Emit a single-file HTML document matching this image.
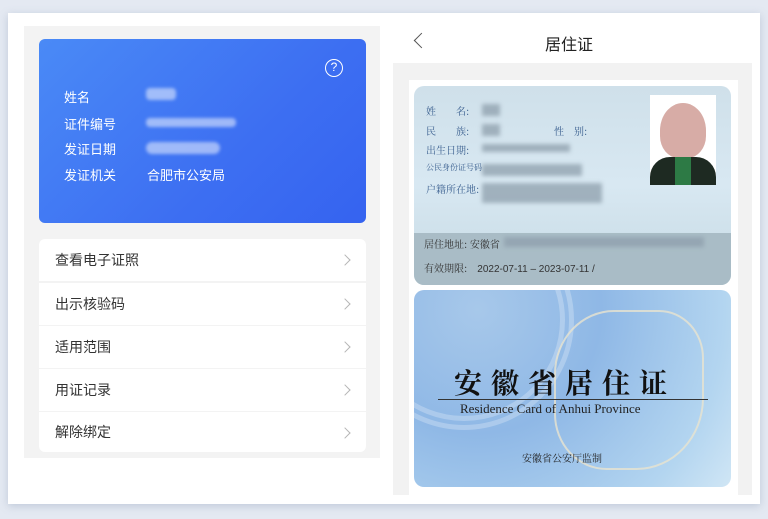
<!DOCTYPE html>
<html><head><meta charset="utf-8"><style>
*{margin:0;padding:0;box-sizing:border-box}
body{width:768px;height:519px;background:#e4e9f2;position:relative;overflow:hidden;font-family:"Liberation Sans","Noto Sans CJK SC",sans-serif}
.panel{position:absolute;left:8px;top:13px;width:752px;height:491px;background:#fff;box-shadow:0 2px 8px rgba(120,140,170,.35)}
.lg{position:absolute;left:24px;top:26px;width:356px;height:432px;background:#f3f3f3}
.blue{position:absolute;left:39px;top:39px;width:327px;height:184px;border-radius:6px;background:linear-gradient(135deg,#4a8af6,#3d6ff2 60%,#3563f0)}
.lab{position:absolute;left:64px;color:#fff;font-size:13px}
.val{position:absolute;left:147px;color:#fff;font-size:13px}
.blur{position:absolute;background:rgba(255,255,255,.5);border-radius:4px;filter:blur(1.5px)}
.q{position:absolute;left:325px;top:59px;width:18px;height:18px;border:1.5px solid #fff;border-radius:50%;color:#fff;font-size:12px;text-align:center;line-height:15px}
.row{position:absolute;left:39px;width:327px;height:42px;background:#fff;font-size:14px;color:#333;padding-left:16px;line-height:42px}
.row:after{content:"";position:absolute;right:17px;top:17px;width:7px;height:7px;border-top:1px solid #b5b5b5;border-right:1px solid #b5b5b5;transform:rotate(45deg)}
.rg{position:absolute;left:393px;top:63px;width:359px;height:432px;background:#f2f2f2}
.rw{position:absolute;left:409px;top:80px;width:329px;height:415px;background:#fff}
.c1{position:absolute;left:414px;top:86px;width:317px;height:199px;border-radius:10px;background:linear-gradient(180deg,#cfe0ea,#d8e8f2 50%,#c5d9e3);overflow:hidden}
.c2{position:absolute;left:414px;top:290px;width:317px;height:197px;border-radius:10px;background:radial-gradient(circle at 20% 10%,#a7c8ea,#8fb8e6 40%,#b3d5f0 80%,#d0e6f5);overflow:hidden}
.t{position:absolute;font-family:"Noto Serif CJK SC","Liberation Serif",serif;color:#3a5f8f}
.gb{position:absolute;background:#8e9fac;filter:blur(2px);opacity:.75}
</style></head><body>
<div class="panel"></div>
<div class="lg"></div>
<div class="blue"></div>
<div class="q">?</div>
<div class="lab" style="top:87px">姓名</div>
<div class="lab" style="top:114px">证件编号</div>
<div class="lab" style="top:139px">发证日期</div>
<div class="lab" style="top:165px">发证机关</div>
<div class="blur" style="left:146px;top:88px;width:30px;height:12px"></div>
<div class="blur" style="left:146px;top:118px;width:90px;height:9px"></div>
<div class="blur" style="left:146px;top:142px;width:74px;height:12px;border-radius:6px"></div>
<div class="val" style="top:165px">合肥市公安局</div>
<div class="row" style="top:239px;border-radius:6px 6px 0 0">查看电子证照</div>
<div class="row" style="top:283px">出示核验码</div>
<div class="row" style="top:326px">适用范围</div>
<div class="row" style="top:369px">用证记录</div>
<div class="row" style="top:412px;height:40px;line-height:40px;border-radius:0 0 6px 6px">解除绑定</div>
<div style="position:absolute;left:416px;top:35px;width:11px;height:11px;border-left:1.5px solid #555;border-bottom:1.5px solid #555;transform:rotate(45deg)"></div>
<div style="position:absolute;left:545px;top:31px;font-size:16px;color:#222">居住证</div>
<div class="rg"></div><div class="rw"></div>
<div class="c1">
<div style="position:absolute;left:0;top:147px;width:317px;height:52px;background:#a9bcc6"></div>
<div class="t" style="left:12px;top:17px;font-size:10px">姓　　名:</div>
<div class="t" style="left:12px;top:37px;font-size:10px">民　　族:</div>
<div class="t" style="left:140px;top:37px;font-size:10px">性　别:</div>
<div class="t" style="left:12px;top:56px;font-size:10px">出生日期:</div>
<div class="t" style="left:12px;top:76px;font-size:8px">公民身份证号码</div>
<div class="t" style="left:12px;top:95px;font-size:10px">户籍所在地:</div>
<div class="gb" style="left:68px;top:18px;width:18px;height:12px"></div>
<div class="gb" style="left:68px;top:38px;width:18px;height:12px"></div>
<div class="gb" style="left:68px;top:58px;width:88px;height:8px"></div>
<div class="gb" style="left:68px;top:78px;width:100px;height:12px"></div>
<div class="gb" style="left:68px;top:97px;width:120px;height:20px"></div>
<div style="position:absolute;left:236px;top:9px;width:66px;height:90px;background:#fff"><div style="position:absolute;left:10px;top:8px;width:46px;height:55px;border-radius:50% 50% 40% 40%;background:#d7aca6"></div><div style="position:absolute;left:0;top:62px;width:66px;height:28px;background:#1e2a22;border-radius:20px 20px 0 0"></div><div style="position:absolute;left:25px;top:62px;width:16px;height:28px;background:#2d7a45"></div></div>
<div class="t" style="left:10px;top:150px;font-size:10px;color:#333">居住地址: 安徽省</div>
<div class="gb" style="left:90px;top:151px;width:200px;height:10px"></div>
<div class="t" style="left:10px;top:174px;font-size:10px;color:#333">有效期限:　<span style="font-family:Liberation Sans">2022-07-11 – 2023-07-11 /</span></div>
</div>
<div class="c2">
<div style="position:absolute;left:-60px;top:-80px;width:220px;height:220px;border-radius:50%;border:14px double rgba(255,255,255,.25)"></div>
<div style="position:absolute;left:140px;top:20px;width:150px;height:160px;border:2px solid #e8e4cf;border-radius:40% 30% 45% 35%;opacity:.8"></div>
<div class="t" style="left:40px;top:72px;font-size:28px;color:#111;letter-spacing:9px;font-weight:bold">安徽省居住证</div>
<div style="position:absolute;left:24px;top:109px;width:270px;height:1px;background:#333"></div>
<div style="position:absolute;left:46px;top:111px;font-family:'Liberation Serif',serif;font-size:13px;color:#222">Residence Card of Anhui Province</div>
<div class="t" style="left:108px;top:160px;font-size:10px;color:#222">安徽省公安厅监制</div>
</div>
</body></html>
